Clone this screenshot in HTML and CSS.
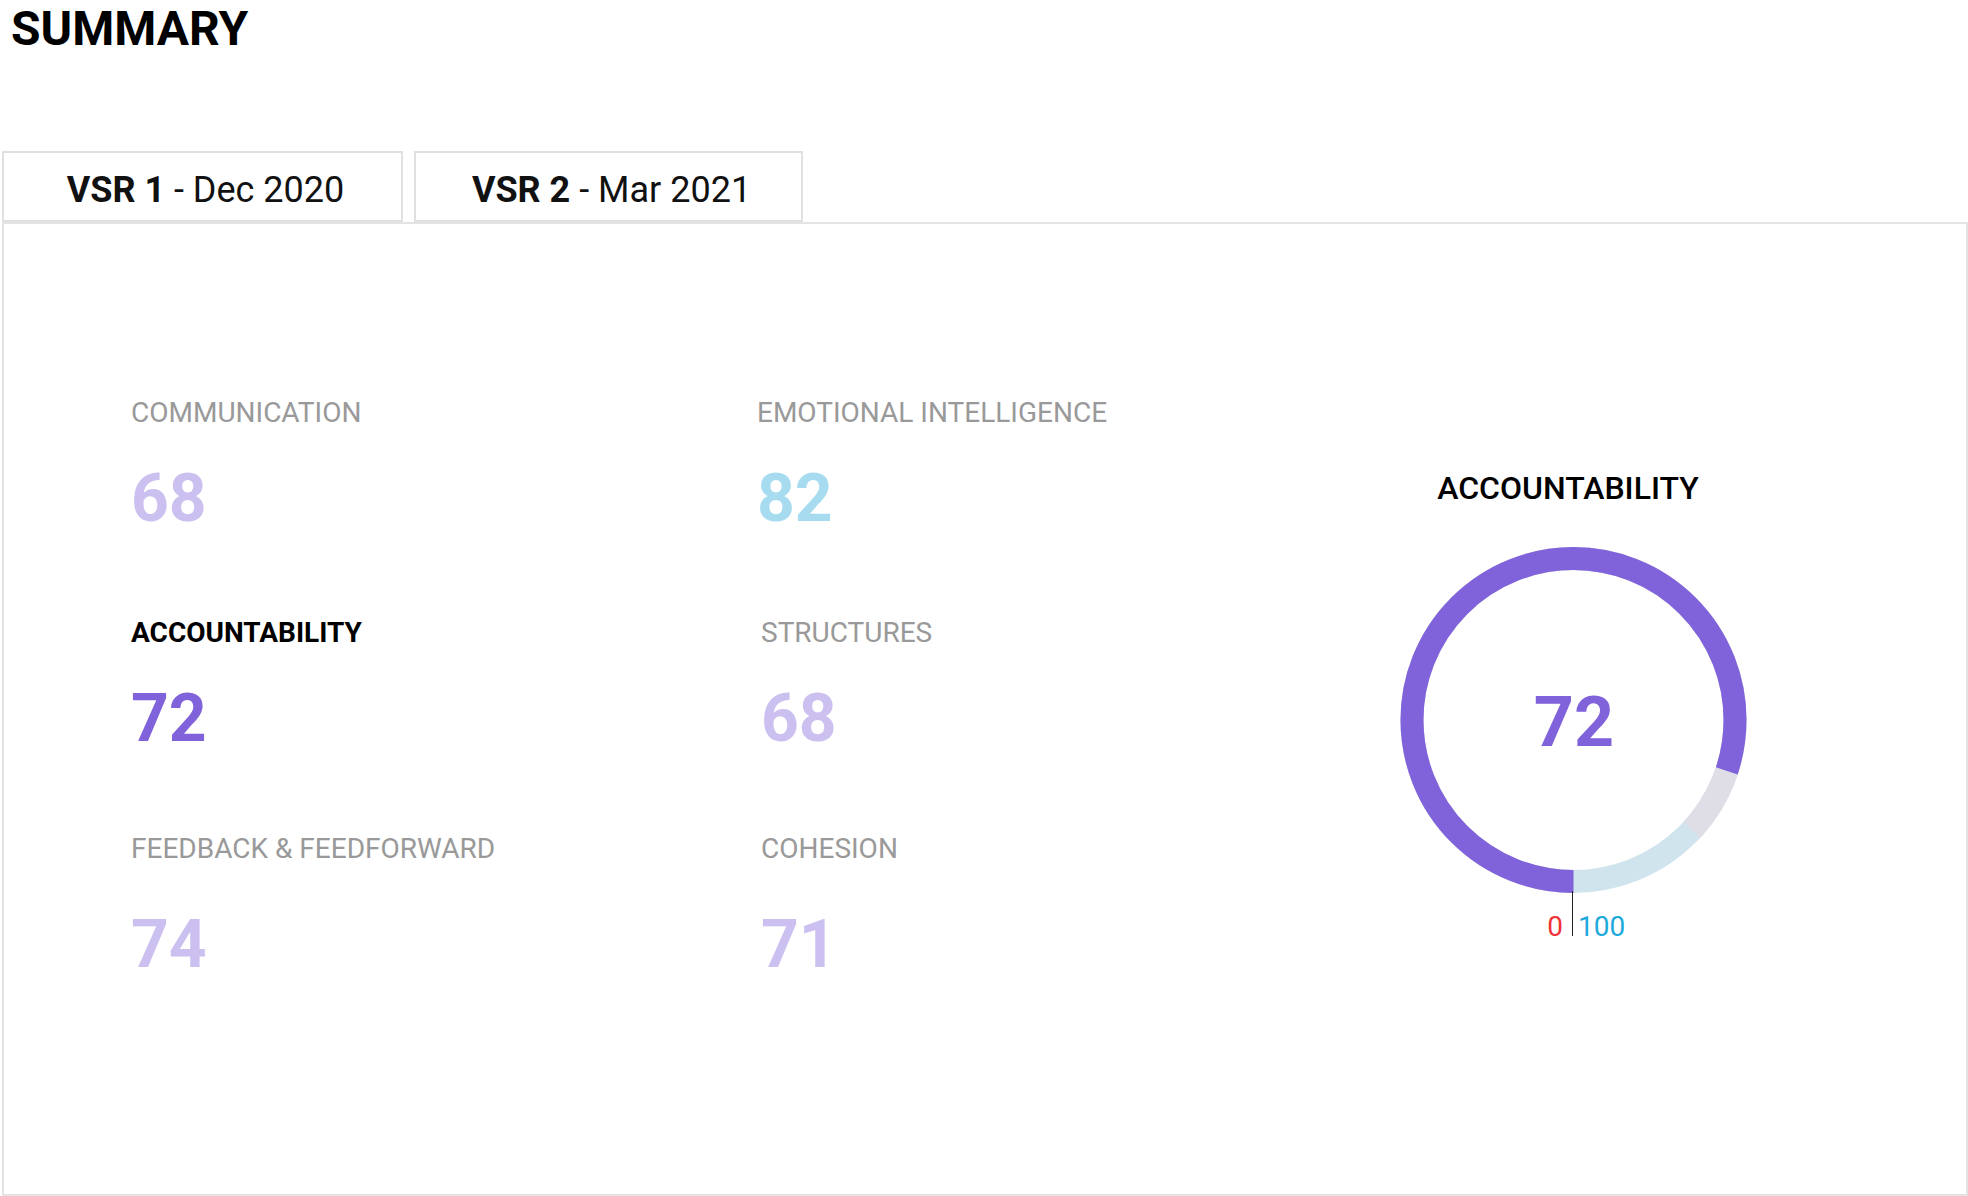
FILE: index.html
```html
<!DOCTYPE html>
<html lang="en">
<head>
    <meta charset="UTF-8">
    <meta name="viewport" content="width=device-width, initial-scale=1.0">
    <title>Summary</title>
    <link rel="stylesheet" href="styles.css">
</head>
<body>
    <div class="page">
        <h1 class="page-title">SUMMARY</h1>

        <div class="tabs">
            <div class="tab tab-first"><b>VSR 1</b> - Dec 2020</div>
            <div class="tab tab-second"><b>VSR 2</b> - Mar 2021</div>
        </div>

        <div class="panel">
            <div class="metrics">
                <div class="metric">
                    <div class="metric-label">COMMUNICATION</div>
                    <div class="metric-value soft">68</div>
                </div>
                <div class="metric">
                    <div class="metric-label">EMOTIONAL INTELLIGENCE</div>
                    <div class="metric-value sky">82</div>
                </div>
                <div class="metric active">
                    <div class="metric-label">ACCOUNTABILITY</div>
                    <div class="metric-value strong">72</div>
                </div>
                <div class="metric nudge">
                    <div class="metric-label">STRUCTURES</div>
                    <div class="metric-value soft">68</div>
                </div>
                <div class="metric last">
                    <div class="metric-label">FEEDBACK &amp; FEEDFORWARD</div>
                    <div class="metric-value soft">74</div>
                </div>
                <div class="metric nudge last">
                    <div class="metric-label">COHESION</div>
                    <div class="metric-value soft">71</div>
                </div>
            </div>

            <div class="gauge">
                <div class="gauge-title">ACCOUNTABILITY</div>
                <svg class="gauge-chart" width="360" height="404" viewBox="0 0 360 404">
                    <g transform="rotate(90 179.5 180)">
                        <circle class="ring ring-rest" cx="179.5" cy="180" r="161.5" pathLength="100"></circle>
                        <circle class="ring ring-mid" cx="179.5" cy="180" r="161.5" pathLength="100" stroke-dasharray="86.9 100"></circle>
                        <circle class="ring ring-value" cx="179.5" cy="180" r="161.5" pathLength="100" stroke-dasharray="80.1 100"></circle>
                    </g>
                    <line class="gauge-tick" x1="178.5" y1="351" x2="178.5" y2="396"></line>
                    <text class="gauge-score" x="180" y="206">72</text>
                    <text class="gauge-min" x="169" y="396">0</text>
                    <text class="gauge-max" x="184" y="396">100</text>
                </svg>
            </div>
        </div>
    </div>
</body>
</html>
```

FILE: styles.css
```css
body {
    margin: 0;
    font-family: Roboto, "Liberation Sans", Arial, sans-serif;
    background-color: #fff;
    color: #111;
}
.page {
    padding-left: 2px;
}
.page-title {
    margin: 0;
    padding-left: 9px;
    font-size: 48px;
    line-height: 58px;
    font-weight: 700;
    color: #000;
}
.tabs {
    display: flex;
    gap: 11px;
    margin-top: 93px;
}
.tab {
    box-sizing: border-box;
    height: 71px;
    padding-top: 7px;
    border: 2px solid #e0e0e0;
    font-size: 36px;
    line-height: 60px;
    text-align: center;
    white-space: nowrap;
}
.tab b {
    font-weight: 700;
}
.tab-first {
    width: 401px;
    padding-left: 6px;
}
.tab-second {
    width: 389px;
    padding-left: 6px;
}
.panel {
    box-sizing: border-box;
    display: flex;
    align-items: flex-start;
    height: 974px;
    padding: 173px 0 0 127px;
    border: 2px solid #e3e3e3;
}
.metrics {
    display: grid;
    grid-template-columns: 626px 617px;
    row-gap: 78px;
}
.metric.nudge {
    padding-left: 4px;
}
.metric.last {
    margin-top: -4px;
}
.metric-label {
    font-size: 28px;
    line-height: 32px;
    color: #999;
    white-space: nowrap;
}
.metric.active .metric-label {
    color: #000;
    font-weight: 700;
}
.metric-value {
    margin-top: 30px;
    font-size: 66px;
    line-height: 80px;
    font-weight: 700;
}
.metric.last .metric-value {
    margin-top: 40px;
}
.soft {
    color: #cbc0f0;
}
.sky {
    color: #a7dcf0;
}
.strong {
    color: #8062da;
}
.gauge {
    width: 400px;
    margin-top: 73px;
}
.gauge-title {
    padding-right: 12px;
    font-size: 32px;
    line-height: 36px;
    font-weight: 500;
    color: #000;
    text-align: center;
}
.gauge-chart {
    display: block;
    margin: 34px auto 0;
}
.ring {
    fill: none;
    stroke-width: 23;
}
.ring-rest {
    stroke: #cfe4ec;
}
.ring-mid {
    stroke: #dfdde6;
}
.ring-value {
    stroke: #8062da;
}
.gauge-tick {
    stroke: #222;
    stroke-width: 1;
}
.gauge-score {
    font-family: Roboto, "Liberation Sans", sans-serif;
    font-size: 70px;
    font-weight: 700;
    fill: #8062da;
    text-anchor: middle;
}
.gauge-min,
.gauge-max {
    font-family: Roboto, "Liberation Sans", sans-serif;
    font-size: 28px;
}
.gauge-min {
    fill: #ee3338;
    text-anchor: end;
}
.gauge-max {
    fill: #1ea9dc;
}
```
